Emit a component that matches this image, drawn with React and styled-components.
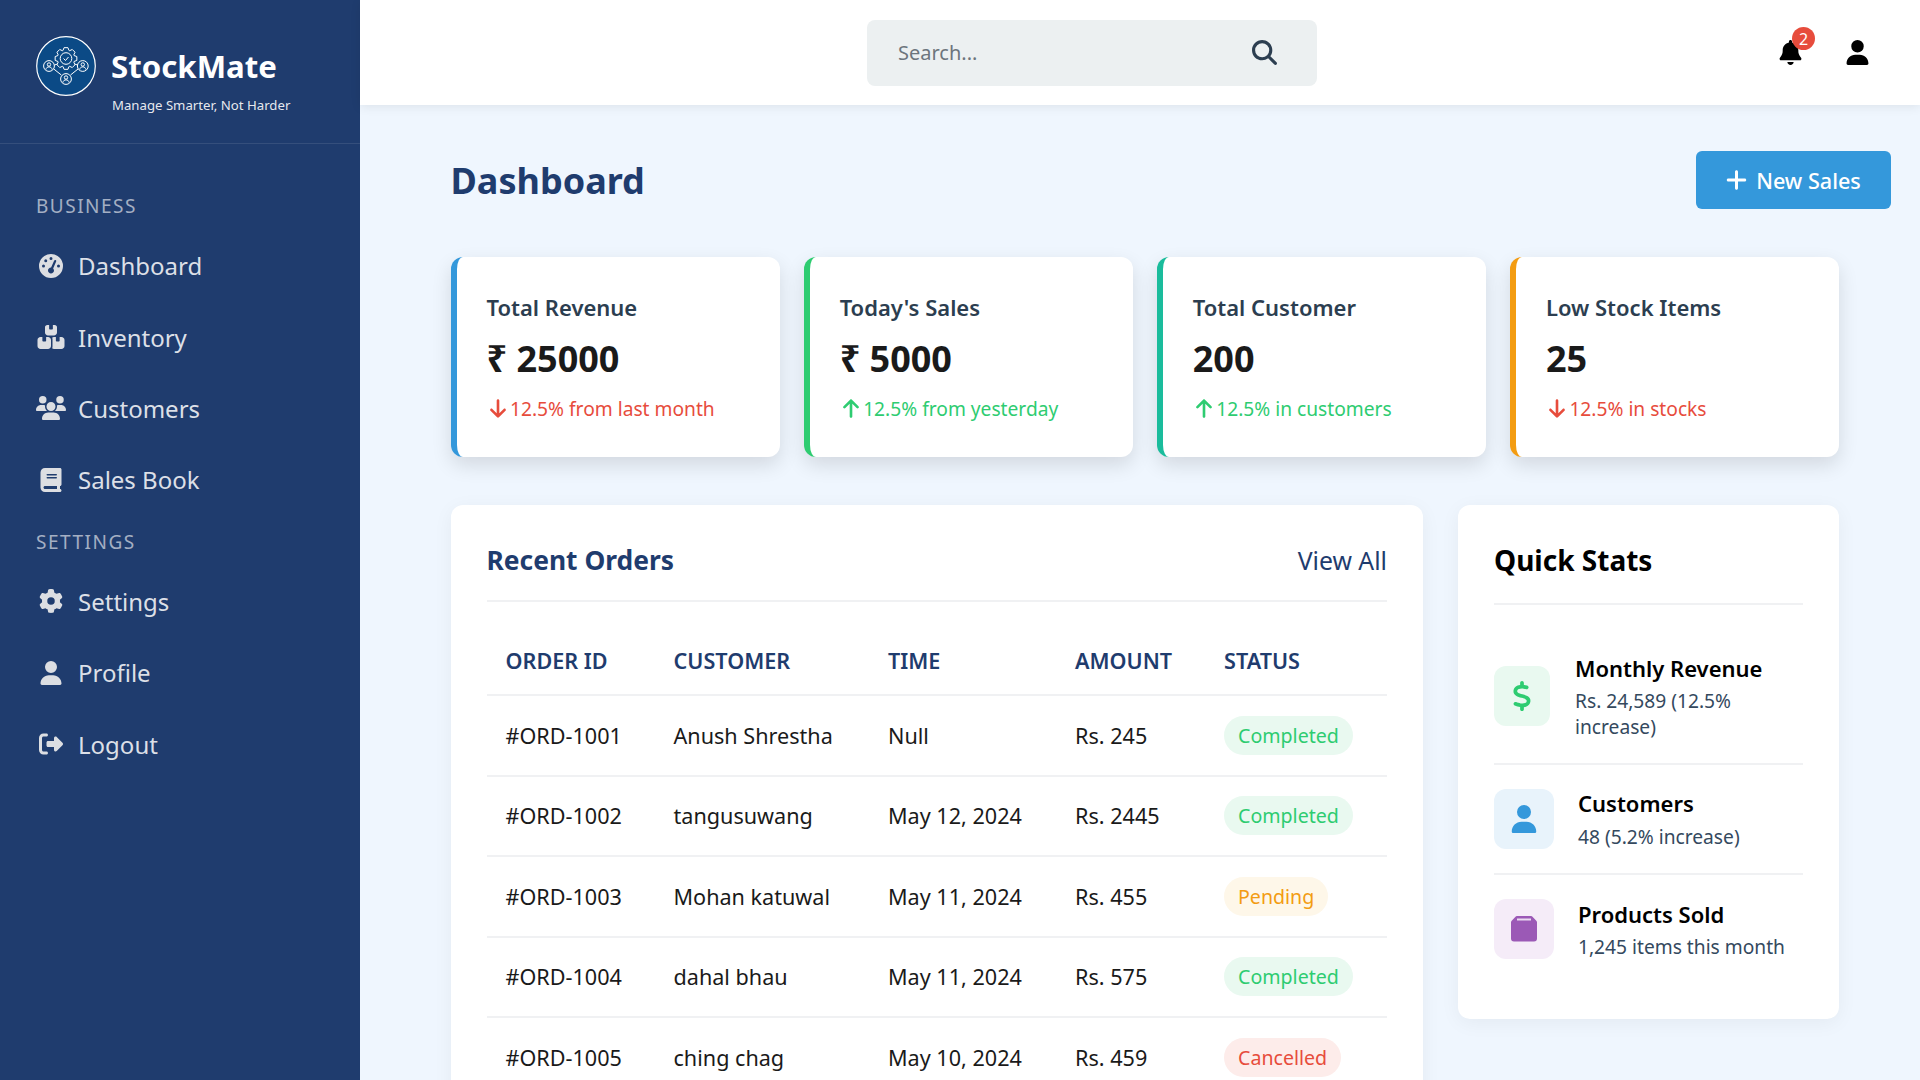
import React from 'react';
import styled, { createGlobalStyle } from 'styled-components';
import { FaGaugeHigh, FaBoxesStacked, FaUsers, FaBook, FaGear, FaUser, FaRightFromBracket, FaBell, FaMagnifyingGlass, FaPlus, FaArrowDown, FaArrowUp, FaDollarSign } from 'react-icons/fa6';

const Global = createGlobalStyle`
  html, body { margin: 0; padding: 0; height: 100%; overflow: hidden; }
  body { font-family: "Noto Sans", "Open Sans", sans-serif; background: #eff6fe; }
  * { box-sizing: border-box; }
`;

const Shell = styled.div`display: flex; height: 1080px; overflow: hidden;`;
const Sidebar = styled.aside`width: 360px; flex: none; background: #1f3c6e; color: #fff;`;
const Brand = styled.div`height: 144px; border-bottom: 1px solid rgba(255,255,255,.1); padding: 36px 36px 0; display: flex; gap: 15px;`;
const BrandText = styled.div`display: flex; flex-direction: column; padding-top: 9px;`;
const BrandName = styled.div`font-size: 31.2px; font-weight: 700; line-height: 42px; height: 51px; white-space: nowrap;`;
const Tagline = styled.div`font-size: 13.2px; line-height: 19px; color: rgba(255,255,255,.9); margin-left: 1px; white-space: nowrap;`;
const Nav = styled.nav`padding: 50px 0 0 36px;`;
const SectionLabel = styled.div`font-size: 19px; line-height: 25px; letter-spacing: 1.5px; color: rgba(255,255,255,.6); margin-bottom: ${p => p.$mb}px; margin-top: ${p => p.$mt || 0}px;`;
const NavItem = styled.div`display: flex; align-items: center; height: 71.4px; font-size: 24px; color: rgba(255,255,255,.85); gap: 12px;`;
const NavIcon = styled.span`width: 30px; flex: none; display: flex; justify-content: center; color: #dcdee2; svg { height: 24px; width: 30px; }`;

const Content = styled.div`flex: 1; min-width: 0; display: flex; flex-direction: column;`;
const Header = styled.header`height: 105px; flex: none; background: #fff; box-shadow: 0 2px 10px rgba(0,0,0,.08); display: flex; align-items: center; position: relative; z-index: 2;`;
const Search = styled.div`margin-left: 507px; width: 450px; height: 66px; background: #ecf0f1; border-radius: 8px; display: flex; align-items: center; padding: 0 40px 0 31px; justify-content: space-between; color: #6c757d; font-size: 20px; svg { height: 25px; width: 25px; color: #2c3e50; }`;
const HeaderIcons = styled.div`margin-left: auto; margin-right: 51px; display: flex; align-items: center; gap: 44px; color: #000; svg { height: 25px; width: 23px; }`;
const Bell = styled.div`position: relative; display: flex;`;
const Badge = styled.span`position: absolute; top: -13px; right: -13px; width: 23px; height: 23px; border-radius: 50%; background: #e74c3c; color: #fff; font-size: 16px; display: flex; align-items: center; justify-content: center;`;
const Main = styled.main`padding: 46px 29px 0 90.5px;`;
const TitleRow = styled.div`display: flex; justify-content: space-between; align-items: center; height: 58px; margin-bottom: 48px;`;
const Title = styled.h1`margin: 0; font-size: 36px; font-weight: 700; color: #1f3c6e;`;
const NewButton = styled.button`width: 195px; height: 58px; border: 0; border-radius: 6px; background: #3498db; color: #fff; font: 500 21.6px "Noto Sans", sans-serif; display: flex; align-items: center; justify-content: center; gap: 9px; svg { height: 24px; width: 21px; }`;
const Cards = styled.div`width: 1388.5px; display: grid; grid-template-columns: repeat(4, 1fr); gap: 24px; margin-bottom: 48px;`;
const Card = styled.div`height: 200px; border-radius: 12px; background: #fff; border-left: 6px solid ${p => p.$c}; box-shadow: 0 8px 20px rgba(0,0,0,.12); padding: 35px 30px;`;
const CardLabel = styled.div`font-size: 22px; font-weight: 600; color: #2c3e50; line-height: 30px; margin-bottom: 11px;`;
const CardValue = styled.div`font-size: 36px; font-weight: 700; color: #1a1a1a; line-height: 52px; margin-bottom: 10px;`;
const CardDelta = styled.div`font-size: 19.2px; line-height: 27px; color: ${p => p.$c}; display: flex; align-items: center; white-space: nowrap; gap: 3.5px; svg { height: 21px; width: 18px; margin-left: 2px; }`;
const Lower = styled.div`width: 1388.5px; display: grid; grid-template-columns: 1fr 381px; gap: 35px;`;
const Panel = styled.section`background: #fff; border-radius: 12px; box-shadow: 0 4px 20px rgba(0,0,0,.05); padding: 30px 36px;`;
const OrdersHead = styled.div`display: flex; justify-content: space-between; align-items: center; height: 67px; border-bottom: 2px solid #f0f1f3; padding-bottom: 15px;`;
const OrdersTitle = styled.h2`margin: 0; font-size: 26.4px; font-weight: 700; color: #1f3c6e;`;
const ViewAll = styled.a`font-size: 24.8px; color: #1f3c6e;`;
const Table = styled.table`width: 100%; margin-top: 25px; border-collapse: collapse; font-size: 21.6px; color: #1a1a1a;`;
const Th = styled.th`text-align: left; padding: 0 0 0 19px; height: 68px; color: #1f3c6e; font-weight: 600; font-size: 21.6px; border-bottom: 2px solid #f0f1f3; width: ${p => p.$w}px;`;
const Td = styled.td`padding: 0 0 0 19px; height: 80.5px; border-bottom: 2px solid #f0f1f3; white-space: nowrap;`;
const Pill = styled.span`display: inline-block; font-size: 19.6px; line-height: 27px; padding: 6px 14px; border-radius: 20px; color: ${p => p.$c}; background: ${p => p.$bg};`;
const StatsTitle = styled.h2`margin: 0; font-size: 28px; font-weight: 700; color: #000; line-height: 38px;`;
const StatsPanel = styled(Panel)`height: 514px; padding: 36px 36px 30px;`;
const StatsList = styled.div`margin-top: 23.5px; border-top: 2px solid #f0f1f3; padding-top: 30px;`;
const Stat = styled.div`display: flex; align-items: center; gap: ${p => p.$gap}px; padding: ${p => p.$pad}; border-bottom: ${p => p.$last ? 0 : '2px solid #f0f1f3'};`;
const StatIcon = styled.div`width: ${p => p.$w}px; height: 60px; flex: none; border-radius: 12px; background: ${p => p.$bg}; color: ${p => p.$c}; display: flex; align-items: center; justify-content: center; svg { height: ${p => p.$h}px; width: 26px; }`;
const StatBody = styled.div``;
const StatName = styled.div`font-size: 22px; font-weight: 600; color: #000; line-height: 30px; margin-bottom: 5.5px;`;
const StatValue = styled.div`font-size: 19.2px; line-height: 26px; color: #34495e;`;

const gear = (() => {
  const pts = [];
  const n = 8, cx = 30, cy = 22.5;
  for (let i = 0; i < n; i++) {
    const a = (i / n) * Math.PI * 2 - Math.PI / 2;
    const step = Math.PI * 2 / n;
    [[-.5, 8.6], [-.25, 11], [.25, 11], [.5, 8.6]].forEach(([o, r]) => {
      pts.push(`${(cx + r * Math.cos(a + o * step * .9)).toFixed(2)},${(cy + r * Math.sin(a + o * step * .9)).toFixed(2)}`);
    });
  }
  return pts.join(' ');
})();

const Person = ({ x, y }) => (
  <g>
    <circle cx={x} cy={y} r="5.4" />
    <circle cx={x} cy={y - 1.5} r="1.7" />
    <path d={`M${x - 3} ${y + 3.5}c0-3.5 6-3.5 6 0`} />
  </g>
);

const Logo = () => (
  <svg width="60" height="60" viewBox="0 0 60 60" fill="none" stroke="#fff">
    <circle cx="30" cy="30" r="29.3" fill="#0b4a86" strokeWidth="1.2" />
    <g strokeWidth="1">
      <polygon points={gear} />
      <circle cx="30" cy="22.5" r="5.8" />
      <path d="M27.5 22.5l2 2 3-3.5" />
      <Person x={13} y={30} />
      <Person x={46.8} y={30} />
      <Person x={30} y={43} />
      <path d="M17.8 33l7.5 6M42 33l-7.5 6M18.5 29l3-1M41.5 29l-3-1" />
    </g>
  </svg>
);

const BoxIcon = () => (
  <svg viewBox="0 0 26 26">
    <path d="M6 0h14a2 2 0 011.5.7l3.8 4a2.5 2.5 0 01.7 1.800v16a3 3 0 01-3 3h-20a3 3 0 01-3-3v-16a2.500 2.500 0 01.7-1.800l3.800-4a2 2 0 011.500-.7z" fill="#9b59b6" />
    <rect x="6" y="2.5" width="14" height="2" fill="#eadcf0" />
  </svg>
);

const nav1 = [[FaGaugeHigh, 'Dashboard'], [FaBoxesStacked, 'Inventory'], [FaUsers, 'Customers'], [FaBook, 'Sales Book']];
const nav2 = [[FaGear, 'Settings'], [FaUser, 'Profile'], [FaRightFromBracket, 'Logout']];
const red = '#e74c3c', green = '#2ecc71';
const cards = [
  ['#3498db', 'Total Revenue', '₹ 25000', red, FaArrowDown, '12.5% from last month'],
  [green, "Today's Sales", '₹ 5000', green, FaArrowUp, '12.5% from yesterday'],
  ['#1abc9c', 'Total Customer', '200', green, FaArrowUp, '12.5% in customers'],
  ['#f39c12', 'Low Stock Items', '25', red, FaArrowDown, '12.5% in stocks'],
];
const status = {
  Completed: ['#2ecc71', '#e9f9f0'],
  Pending: ['#f39c12', '#fef7e9'],
  Cancelled: ['#e74c3c', '#fdecea'],
};
const rows = [
  ['#ORD-1001', 'Anush Shrestha', 'Null', 'Rs. 245', 'Completed'],
  ['#ORD-1002', 'tangusuwang', 'May 12, 2024', 'Rs. 2445', 'Completed'],
  ['#ORD-1003', 'Mohan katuwal', 'May 11, 2024', 'Rs. 455', 'Pending'],
  ['#ORD-1004', 'dahal bhau', 'May 11, 2024', 'Rs. 575', 'Completed'],
  ['#ORD-1005', 'ching chag', 'May 10, 2024', 'Rs. 459', 'Cancelled'],
];

const NavLink = ({ icon: Icon, label }) => (
  <NavItem><NavIcon><Icon /></NavIcon>{label}</NavItem>
);

export default function App() {
  return (
    <Shell>
      <Global />
      <Sidebar>
        <Brand>
          <Logo />
          <BrandText>
            <BrandName>StockMate</BrandName>
            <Tagline>Manage Smarter, Not Harder</Tagline>
          </BrandText>
        </Brand>
        <Nav>
          <SectionLabel $mb={11}>BUSINESS</SectionLabel>
          {nav1.map(([i, l]) => <NavLink key={l} icon={i} label={l} />)}
          <SectionLabel $mb={11} $mt={14}>SETTINGS</SectionLabel>
          {nav2.map(([i, l]) => <NavLink key={l} icon={i} label={l} />)}
        </Nav>
      </Sidebar>
      <Content>
        <Header>
          <Search>Search...<FaMagnifyingGlass /></Search>
          <HeaderIcons>
            <Bell><FaBell /><Badge>2</Badge></Bell>
            <FaUser />
          </HeaderIcons>
        </Header>
        <Main>
          <TitleRow>
            <Title>Dashboard</Title>
            <NewButton><FaPlus />New Sales</NewButton>
          </TitleRow>
          <Cards>
            {cards.map(([bar, label, value, c, Icon, delta]) => (
              <Card key={label} $c={bar}>
                <CardLabel>{label}</CardLabel>
                <CardValue>{value}</CardValue>
                <CardDelta $c={c}><Icon />{delta}</CardDelta>
              </Card>
            ))}
          </Cards>
          <Lower>
            <Panel>
              <OrdersHead>
                <OrdersTitle>Recent Orders</OrdersTitle>
                <ViewAll>View All</ViewAll>
              </OrdersHead>
              <Table>
                <thead>
                  <tr>
                    <Th $w={168}>ORDER ID</Th><Th $w={214.5}>CUSTOMER</Th><Th $w={187}>TIME</Th><Th $w={149}>AMOUNT</Th><Th>STATUS</Th>
                  </tr>
                </thead>
                <tbody>
                  {rows.map(r => (
                    <tr key={r[0]}>
                      <Td>{r[0]}</Td><Td>{r[1]}</Td><Td>{r[2]}</Td><Td>{r[3]}</Td>
                      <Td><Pill $c={status[r[4]][0]} $bg={status[r[4]][1]}>{r[4]}</Pill></Td>
                    </tr>
                  ))}
                </tbody>
              </Table>
            </Panel>
            <StatsPanel>
              <StatsTitle>Quick Stats</StatsTitle>
              <StatsList>
                <Stat $gap={25} $pad="18px 0 23px">
                  <StatIcon $w={56} $h={30} $bg="#e9f9f0" $c={green}><FaDollarSign /></StatIcon>
                  <StatBody>
                    <StatName>Monthly Revenue</StatName>
                    <StatValue>Rs. 24,589 (12.5% increase)</StatValue>
                  </StatBody>
                </Stat>
                <Stat $gap={24} $pad="23px 0 23px">
                  <StatIcon $w={60} $h={28} $bg="#e8f3fb" $c="#3498db"><FaUser /></StatIcon>
                  <StatBody>
                    <StatName>Customers</StatName>
                    <StatValue>48 (5.2% increase)</StatValue>
                  </StatBody>
                </Stat>
                <Stat $gap={24} $pad="24px 0" $last>
                  <StatIcon $w={60} $h={26} $bg="#f5ecf8" $c="#9b59b6"><BoxIcon /></StatIcon>
                  <StatBody>
                    <StatName>Products Sold</StatName>
                    <StatValue>1,245 items this month</StatValue>
                  </StatBody>
                </Stat>
              </StatsList>
            </StatsPanel>
          </Lower>
        </Main>
      </Content>
    </Shell>
  );
}
